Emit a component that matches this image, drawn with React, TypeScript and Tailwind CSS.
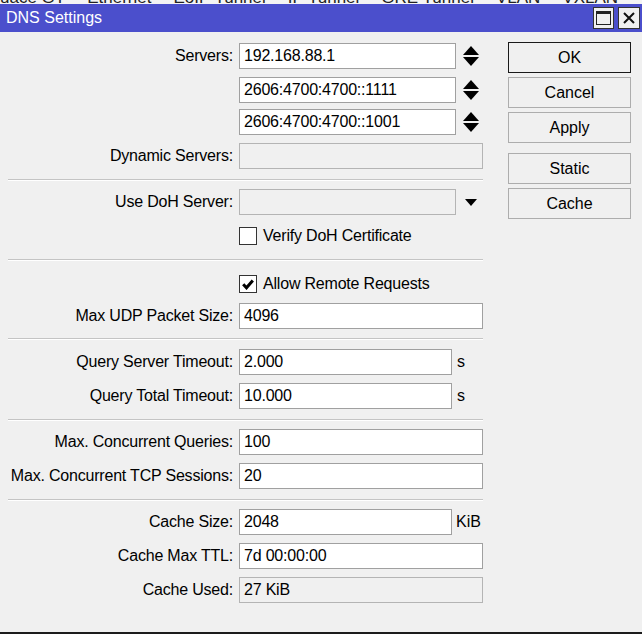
import React from "react";

const FONT = { fontFamily: '"Liberation Sans", Arial, sans-serif' };

function Label({ children }: { children: React.ReactNode }) {
  return (
    <div className="w-[233px] shrink-0 text-right text-[16px] tracking-[-0.2px] leading-none text-black whitespace-nowrap">
      {children}
    </div>
  );
}

function Field({
  value = "",
  width,
  disabled = false,
}: {
  value?: string;
  width: string;
  disabled?: boolean;
}) {
  return (
    <div
      className={`${width} h-[26px] border flex items-center pl-[4px] text-[16px] tracking-[-0.2px] text-black ${
        disabled ? "bg-[#f0f0f0] border-[#b4b4b4]" : "bg-white border-[#a0a0a0]"
      }`}
    >
      {value}
    </div>
  );
}

function Row({ label, children, className = "" }: { label?: string; children: React.ReactNode; className?: string }) {
  return (
    <div className={`flex items-center h-[26px] ${className}`}>
      <Label>{label}</Label>
      <div className="ml-[6px] flex items-center">{children}</div>
    </div>
  );
}

function Spinner() {
  return (
    <svg width="16" height="20" viewBox="0 0 16 20" className="ml-[7px]">
      <polygon points="8,0 16,9 0,9" fill="#000" />
      <polygon points="0,11 16,11 8,20" fill="#000" />
    </svg>
  );
}

function Separator({ className = "" }: { className?: string }) {
  return <div className={`ml-[8px] w-[475px] border-t border-[#c4c4c4] border-b border-b-white ${className}`} />;
}

function Checkbox({ checked, label, className = "" }: { checked?: boolean; label: string; className?: string }) {
  return (
    <div className={`flex items-center h-[18px] ${className}`}>
      <div className="w-[239px] shrink-0" />
      <div className="w-[18px] h-[18px] bg-white border border-[#333] flex items-center justify-center">
        {checked && (
          <svg width="12" height="11" viewBox="0 0 12 11">
            <path d="M1.2 5.2 L4.5 8.8 L10.8 1.5" stroke="#000" strokeWidth="3" fill="none" />
          </svg>
        )}
      </div>
      <span className="ml-[6px] text-[16px] tracking-[-0.2px] leading-none text-black">{label}</span>
    </div>
  );
}

function Button({ children, primary = false, className = "" }: { children: React.ReactNode; primary?: boolean; className?: string }) {
  return (
    <div
      className={`w-[123px] h-[31px] flex items-center justify-center text-[16px] text-black bg-[#f0f0f0] border ${
        primary ? "border-[#1a1a1a] border-[1.5px]" : "border-[#adadad]"
      } ${className}`}
    >
      {children}
    </div>
  );
}

export default function App() {
  return (
    <div className="w-[642px] h-[634px] bg-[#f0f0f0] flex flex-col overflow-hidden" style={FONT}>
      {/* tab strip of the window behind, mostly hidden */}
      <div className="h-[4px] bg-[#f4f4f4] overflow-hidden shrink-0">
        <div className="-mt-[10px] flex gap-[22px] text-[17px] leading-[16px] text-[#222] whitespace-nowrap">
          <span>uace GT</span>
          <span>Ethernet</span>
          <span>EoIP Tunnel</span>
          <span>IP Tunnel</span>
          <span>GRE Tunnel</span>
          <span>VLAN</span>
          <span>VXLAN</span>
          <span>VRRP</span>
        </div>
      </div>

      {/* title bar */}
      <div className="h-[28px] bg-[#4b4fcc] flex items-center justify-between shrink-0">
        <span className="pl-[6px] text-white text-[16px]">DNS Settings</span>
        <div className="flex items-center gap-[4px] pr-[2px]">
          <div className="w-[21px] h-[22px] bg-[#f0f0f0] border border-[#333] flex items-center justify-center">
            <div className="w-[15px] h-[14px] border border-[#222] border-t-[3px]" />
          </div>
          <div className="w-[22px] h-[22px] bg-[#f0f0f0] border border-[#333] flex items-center justify-center">
            <svg width="12" height="12" viewBox="0 0 12 12">
              <path d="M1 1 L11 11 M11 1 L1 11" stroke="#111" strokeWidth="2" />
            </svg>
          </div>
        </div>
      </div>

      <div className="flex flex-1 border-b-2 border-[#1c1c1c]">
        {/* form */}
        <div className="w-[483px] shrink-0 pt-[11px] flex flex-col">
          <Row label="Servers:">
            <Field value="192.168.88.1" width="w-[217px]" />
            <Spinner />
          </Row>
          <Row className="mt-[8px]">
            <Field value="2606:4700:4700::1111" width="w-[217px]" />
            <Spinner />
          </Row>
          <Row className="mt-[6px]">
            <Field value="2606:4700:4700::1001" width="w-[217px]" />
            <Spinner />
          </Row>
          <Row label="Dynamic Servers:" className="mt-[8px]">
            <Field width="w-[244px]" disabled />
          </Row>

          <Separator className="mt-[10px]" />

          <Row label="Use DoH Server:" className="mt-[8px]">
            <Field width="w-[217px]" disabled />
            <svg width="12" height="7" viewBox="0 0 12 7" className="ml-[9px]">
              <polygon points="0,0 12,0 6,7" fill="#000" />
            </svg>
          </Row>
          <Checkbox label="Verify DoH Certificate" className="mt-[12px]" />

          <Separator className="mt-[14px]" />

          <Checkbox checked label="Allow Remote Requests" className="mt-[14px]" />
          <Row label="Max UDP Packet Size:" className="mt-[10px]">
            <Field value="4096" width="w-[244px]" />
          </Row>

          <Separator className="mt-[9px]" />

          <Row label="Query Server Timeout:" className="mt-[9px]">
            <Field value="2.000" width="w-[213px]" />
            <span className="ml-[5px] text-[16px]">s</span>
          </Row>
          <Row label="Query Total Timeout:" className="mt-[8px]">
            <Field value="10.000" width="w-[213px]" />
            <span className="ml-[5px] text-[16px]">s</span>
          </Row>

          <Separator className="mt-[10px]" />

          <Row label="Max. Concurrent Queries:" className="mt-[8px]">
            <Field value="100" width="w-[244px]" />
          </Row>
          <Row label="Max. Concurrent TCP Sessions:" className="mt-[8px]">
            <Field value="20" width="w-[244px]" />
          </Row>

          <Separator className="mt-[10px]" />

          <Row label="Cache Size:" className="mt-[8px]">
            <Field value="2048" width="w-[213px]" />
            <span className="ml-[4px] text-[16px]">KiB</span>
          </Row>
          <Row label="Cache Max TTL:" className="mt-[8px]">
            <Field value="7d 00:00:00" width="w-[244px]" />
          </Row>
          <Row label="Cache Used:" className="mt-[8px]">
            <Field value="27 KiB" width="w-[244px]" disabled />
          </Row>
        </div>

        {/* buttons */}
        <div className="ml-[25px] pt-[10px] flex flex-col gap-[4px]">
          <Button primary>OK</Button>
          <Button>Cancel</Button>
          <Button>Apply</Button>
          <Button className="mt-[6px]">Static</Button>
          <Button>Cache</Button>
        </div>
      </div>
    </div>
  );
}
